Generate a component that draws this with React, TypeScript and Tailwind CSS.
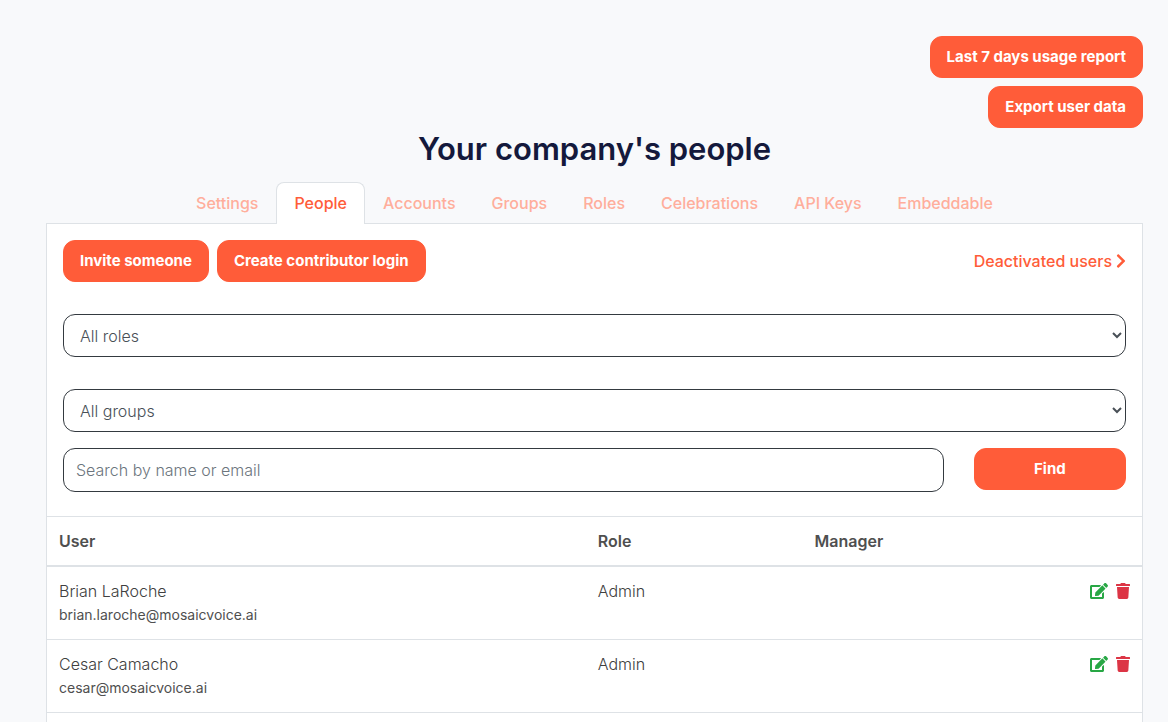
import React from "react";
import { FaChevronRight, FaEdit, FaTrash } from "react-icons/fa";

const tabs = [
  "Settings",
  "People",
  "Accounts",
  "Groups",
  "Roles",
  "Celebrations",
  "API Keys",
  "Embeddable",
];

const users = [
  {
    name: "Brian LaRoche",
    email: "brian.laroche@mosaicvoice.ai",
    role: "Admin",
    manager: "",
  },
  {
    name: "Cesar Camacho",
    email: "cesar@mosaicvoice.ai",
    role: "Admin",
    manager: "",
  },
];

const Button = ({
  children,
  type = "button",
  className = "",
}: {
  children: React.ReactNode;
  type?: "button" | "submit";
  className?: string;
}) => {
  return (
    <button
      type={type}
      className={`h-[42px] rounded-xl border border-[#ff5c39] bg-[#ff5c39] px-4 text-[15px] font-bold text-white ${className}`}
    >
      {children}
    </button>
  );
};

const Tabs = () => {
  return (
    <nav className="flex justify-center">
      {tabs.map((tab) => (
        <a
          key={tab}
          href="#"
          className={
            tab === "People"
              ? "relative -mb-px rounded-t-lg border border-b-0 border-[#dee2e6] bg-white px-[17px] py-2 font-medium text-[#ff5c39]"
              : "border border-b-0 border-transparent px-[17px] py-2 font-medium text-[#ffae9c]"
          }
        >
          {tab}
        </a>
      ))}
    </nav>
  );
};

const FilterSelect = ({ label }: { label: string }) => {
  return (
    <select
      aria-label={label}
      className="h-[43px] w-full rounded-xl border border-[#343a40] bg-white pl-3 text-[#495057]"
    >
      <option>{label}</option>
    </select>
  );
};

const Filters = () => {
  return (
    <form className="mt-8">
      <FilterSelect label="All roles" />
      <div className="mt-8">
        <FilterSelect label="All groups" />
      </div>
      <div className="mt-4 grid grid-cols-12 gap-x-[30px]">
        <input
          type="text"
          aria-label="Search by name or email"
          placeholder="Search by name or email"
          className="col-span-10 h-11 rounded-xl border border-[#343a40] bg-white px-3 text-[#495057] placeholder:text-[#6c757d]"
        />
        <Button type="submit" className="col-span-2 h-[42px]">
          Find
        </Button>
      </div>
    </form>
  );
};

const UsersTable = () => {
  return (
    <table className="w-full table-fixed border-separate border-spacing-0 text-left">
      <thead>
        <tr className="text-[#4f4f4f] [&>th]:border-t [&>th]:border-b-2 [&>th]:border-[#dee2e6] [&>th]:p-3 [&>th]:font-semibold">
          <th className="w-[49.2%]">User</th>
          <th className="w-[19.8%]">Role</th>
          <th>Manager</th>
          <th className="w-20" aria-label="Actions" />
        </tr>
      </thead>
      <tbody>
        {users.map((user) => (
          <tr
            key={user.email}
            className="align-top [&>td]:border-b [&>td]:border-[#dee2e6] [&>td]:p-3"
          >
            <td>
              <div>{user.name}</div>
              <div className="text-sm leading-6 font-normal text-[#4f4f4f]">
                {user.email}
              </div>
            </td>
            <td>{user.role}</td>
            <td>{user.manager}</td>
            <td>
              <div className="flex h-6 items-center justify-end gap-2">
                <a href="#" aria-label="Edit user" className="text-[#28a745]">
                  <FaEdit className="h-4 w-[18px]" />
                </a>
                <a href="#" aria-label="Delete user" className="text-[#dc3545]">
                  <FaTrash className="h-4 w-[14px]" />
                </a>
              </div>
            </td>
          </tr>
        ))}
      </tbody>
    </table>
  );
};

export default function App() {
  return (
    <div className="flex min-h-screen flex-col bg-[#f8f9fb] pt-9 pr-[25px] pl-[46px] font-['Inter',sans-serif] text-base font-light text-[#404040]">
      <div className="flex flex-col items-end gap-2">
        <Button>Last 7 days usage report</Button>
        <Button>Export user data</Button>
      </div>
      <h1 className="mb-3 text-center text-[31px] leading-[42px] font-semibold text-[#14193c]">
        Your company's people
      </h1>
      <Tabs />
      <main className="grow border border-b-0 border-[#dee2e6] bg-white">
        <div className="px-4 pt-4 pb-6">
          <div className="flex items-center gap-2">
            <Button>Invite someone</Button>
            <Button>Create contributor login</Button>
            <a
              href="#"
              className="ml-auto flex items-center gap-1 font-medium text-[#ff5c39]"
            >
              Deactivated users
              <FaChevronRight className="h-4 w-[10px]" />
            </a>
          </div>
          <Filters />
        </div>
        <UsersTable />
      </main>
    </div>
  );
}
